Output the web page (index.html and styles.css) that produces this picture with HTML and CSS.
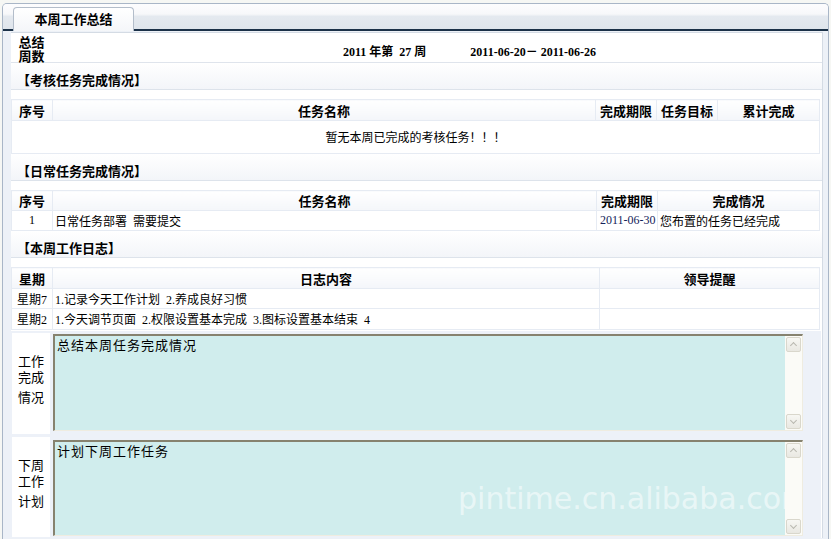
FILE: index.html
```html
<!DOCTYPE html>
<html lang="zh-CN">
<head>
    <meta charset="UTF-8">
    <title>本周工作总结</title>
    <link rel="stylesheet" href="styles.css">
</head>
<body>
    <div class="frame">
        <div class="tabbar">
            <div class="tab">本周工作总结</div>
        </div>

        <div class="panel">
            <!-- week summary -->
            <div class="summary">
                <div class="summary-label">总结<br>周数</div>
                <div class="summary-value">
                    <span class="week">2011 年第&nbsp; 27 周</span>
                    <span class="range">2011-06-20－ 2011-06-26</span>
                </div>
            </div>

            <div class="section-title">【考核任务完成情况】</div>
            <table class="grid">
                <tr class="head">
                    <th class="col-no">序号</th>
                    <th>任务名称</th>
                    <th class="col-date">完成期限</th>
                    <th class="col-goal">任务目标</th>
                    <th class="col-total">累计完成</th>
                </tr>
                <tr class="empty-row">
                    <td colspan="5" class="center">暂无本周已完成的考核任务！！！</td>
                </tr>
            </table>

            <div class="section-title">【日常任务完成情况】</div>
            <table class="grid">
                <tr class="head head-short">
                    <th class="col-no">序号</th>
                    <th>任务名称</th>
                    <th class="col-date">完成期限</th>
                    <th class="col-state">完成情况</th>
                </tr>
                <tr>
                    <td class="center">1</td>
                    <td>日常任务部署&nbsp; 需要提交</td>
                    <td class="date">2011-06-30</td>
                    <td>您布置的任务已经完成</td>
                </tr>
            </table>

            <div class="section-title">【本周工作日志】</div>
            <table class="grid">
                <tr class="head">
                    <th class="col-no">星期</th>
                    <th class="col-log">日志内容</th>
                    <th>领导提醒</th>
                </tr>
                <tr>
                    <td class="center">星期7</td>
                    <td>1.记录今天工作计划&nbsp; 2.养成良好习惯</td>
                    <td></td>
                </tr>
                <tr class="tall">
                    <td class="center">星期2</td>
                    <td>1.今天调节页面&nbsp; 2.权限设置基本完成&nbsp; 3.图标设置基本结束&nbsp; 4</td>
                    <td></td>
                </tr>
            </table>

            <!-- free text boxes -->
            <div class="notes">
                <div class="note-row">
                    <div class="note-label"><span>工作</span><span>完成</span><span class="last">情况</span></div>
                    <div class="note-box">
                        <div class="note-text">总结本周任务完成情况</div>
                        <div class="scrollbar">
                            <span class="scroll-btn up"></span>
                            <span class="scroll-btn down"></span>
                        </div>
                    </div>
                </div>
                <div class="note-row second">
                    <div class="note-label"><span>下周</span><span>工作</span><span class="last">计划</span></div>
                    <div class="note-box">
                        <div class="note-text">计划下周工作任务</div>
                        <span class="watermark">pintime.cn.alibaba.com</span>
                        <div class="scrollbar">
                            <span class="scroll-btn up"></span>
                            <span class="scroll-btn down"></span>
                        </div>
                    </div>
                </div>
            </div>
        </div>
    </div>
</body>
</html>
```
FILE: styles.css
```css
/* Page frame */
body {
    margin: 0;
    background-color: #f6f7f4;
    font-family: "Liberation Serif", "Noto Sans CJK SC", serif;
    font-size: 12px;
    color: #000;
}

.frame {
    margin: 3px 2px 0 2px;
    height: 536px;
    border: 1px solid #a9b6c7;
    border-bottom: none;
    border-radius: 5px 5px 0 0;
    background-color: #edf1f7;
    box-sizing: border-box;
    overflow: hidden;
}

/* Tab strip */
.tabbar {
    display: flex;
    align-items: flex-end;
    height: 25px;
    padding-left: 10px;
    background: linear-gradient(#fdfdfe 0%, #f7f8fa 40%, #e4e9ef 50%, #dfe5ec 100%);
    border-bottom: 2px solid #1b3148;
}

.tab {
    width: 119px;
    height: 23px;
    margin-bottom: -2px;
    border: 1px solid #b3bdca;
    border-bottom: none;
    border-radius: 4px 4px 0 0;
    background: linear-gradient(#ffffff, #f4f6f9);
    font-weight: bold;
    font-size: 13px;
    line-height: 22px;
    text-align: center;
    font-family: "Noto Sans CJK SC", sans-serif;
}

/* Content panel */
.panel {
    margin: 1px 5px 0 8px;
    border-top: 1px solid #d4dbe4;
    border-right: 1px solid #d4dbe4;
    background-color: #ffffff;
    height: 505px;
}

.summary {
    display: flex;
    height: 29px;
    border-bottom: 1px solid #dfe4ec;
}

.summary-label {
    width: 41px;
    padding-top: 3px;
    text-align: center;
    font-weight: bold;
    font-size: 13px;
    line-height: 14px;
}

.summary-value {
    display: flex;
    align-items: center;
    padding: 6px 0 0 291px;
    font-weight: bold;
}

.summary-value .range {
    margin-left: 44px;
}

.section-title {
    height: 26px;
    padding-left: 6px;
    border-bottom: 1px solid #dde3eb;
    background: linear-gradient(#ffffff, #f3f5f9);
    font-weight: bold;
    font-size: 13px;
    line-height: 36px;
    overflow: hidden;
}

/* Data tables */
.grid {
    width: 809px;
    margin-top: 9px;
    border-collapse: collapse;
    border: 1px solid #e3e8f0;
}

.grid th,
.grid td {
    padding: 0 2px;
    border: 1px solid #e6ebf3;
    text-align: left;
    white-space: nowrap;
}

.grid th {
    height: 20px;
    text-align: center;
    font-size: 13px;
    background: linear-gradient(#ffffff, #f4f6fa);
}

.grid .head-short th {
    height: 19px;
}

.grid td {
    height: 19px;
}

.grid .tall td {
    height: 20px;
}

.grid .empty-row td {
    height: 32px;
}

.grid td.center {
    text-align: center;
}

.grid td.date {
    color: #14235a;
    padding: 0 1px 0 3px;
}

.col-no { width: 36px; }
.col-date { width: 56px; }
.col-goal { width: 56px; }
.col-total { width: 97px; }
.col-state { width: 157px; }
.col-log { width: 542px; }

/* Note boxes */
.notes {
    margin-top: 1px;
    background-color: #edf1f8;
    width: 811px;
    margin-left: -1px;
}

.note-row {
    display: flex;
    height: 101px;
    padding: 2px 0 1px 2px;
    gap: 3px;
}

.note-row.second {
    height: 100px;
}

.note-label {
    width: 38px;
    padding-bottom: 9px;
    box-sizing: border-box;
    background-color: #ffffff;
    display: flex;
    flex-direction: column;
    justify-content: center;
    align-items: center;
    font-family: "Noto Sans CJK SC", sans-serif;
    font-size: 13px;
    line-height: 16px;
}

.note-label .last {
    margin-top: 4px;
}

.note-box {
    position: relative;
    width: 750px;
    height: 97px;
    margin-top: 1px;
    box-sizing: border-box;
    border-top: 2px solid #86826f;
    border-left: 2px solid #86826f;
    border-right: 1px solid #efece0;
    border-bottom: 1px solid #efece0;
    background-color: #d0eded;
    overflow: hidden;
}

.second .note-box {
    height: 96px;
    margin-top: 3px;
}

.note-text {
    padding: 1px 2px;
    font-family: "Noto Sans CJK SC", sans-serif;
    font-size: 13px;
    letter-spacing: 1px;
    line-height: 16px;
}

.scrollbar {
    position: absolute;
    top: 0;
    right: 0;
    bottom: 0;
    width: 17px;
    background-color: #fbfbf7;
    display: flex;
    flex-direction: column;
    justify-content: space-between;
    align-items: center;
    padding: 1px 0;
    box-sizing: border-box;
    z-index: 1;
}

.scroll-btn {
    width: 15px;
    height: 15px;
    box-sizing: border-box;
    border: 1px solid #d9d7cc;
    border-radius: 2px;
    background: linear-gradient(#f7f7f3, #e9e8e2);
    position: relative;
}

.scroll-btn::after {
    content: "";
    position: absolute;
    left: 4px;
    width: 4px;
    height: 4px;
    border-left: 1px solid #b9b8b0;
    border-top: 1px solid #b9b8b0;
}

.scroll-btn.up::after {
    top: 5px;
    transform: rotate(45deg);
}

.scroll-btn.down::after {
    top: 3px;
    transform: rotate(225deg);
}

.watermark {
    position: absolute;
    left: 403px;
    top: 39px;
    font-family: "DejaVu Sans", sans-serif;
    font-size: 30px;
    color: rgba(255, 255, 255, 0.55);
    white-space: nowrap;
}
```
